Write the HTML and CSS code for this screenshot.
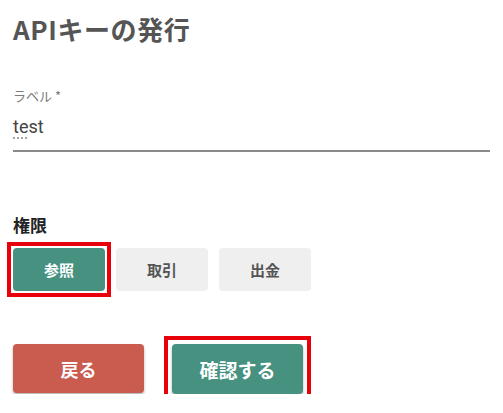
FILE: index.html
```html
<!DOCTYPE html>
<html lang="ja">
<head>
  <meta charset="UTF-8">
  <title>APIキーの発行</title>
  <link rel="stylesheet" href="styles.css">
</head>
<body>

<h1 class="title">APIキーの発行</h1>

<div class="field">
  <label class="field-label">ラベル *</label>
  <div class="field-input"><span class="typo">te</span>st</div>
</div>

<div class="perms">
  <h3>権限</h3>
  <div class="perm-buttons">
    <span class="mark"><button class="perm active">参照</button></span>
    <button class="perm">取引</button>
    <button class="perm">出金</button>
  </div>
</div>

<div class="actions">
  <button class="btn back">戻る</button>
  <span class="mark mark-lg"><button class="btn confirm">確認する</button></span>
</div>

</body>
</html>
```

FILE: styles.css
```css
body {
  margin: 0;
  padding: 0 13px;
  font-family: "Noto Sans CJK JP", "Noto Sans", sans-serif;
  background: #fff;
}
.title {
  margin: 11px 0 0;
  font-size: 26px;
  font-weight: bold;
  color: #555;
  line-height: 36px;
  letter-spacing: 0.6px;
}
.field {
  margin-top: 41px;
  width: 477px;
  border-bottom: 2px solid #8a8a8a;
  padding-bottom: 11px;
}
.field-label {
  display: block;
  font-size: 13px;
  color: #7a7a7a;
  line-height: 16px;
}
.field-input {
  margin-top: 11px;
  font-family: Roboto, sans-serif;
  font-size: 18px;
  color: #444;
  line-height: 24px;
}
.typo {
  text-decoration: underline dotted #999;
  text-underline-offset: 5px;
}
.perms {
  margin-top: 60px;
}
.perms h3 {
  margin: 0;
  font-size: 17px;
  color: #222;
  line-height: 26px;
}
.perm-buttons {
  display: flex;
  gap: 11px;
  margin-top: 10px;
}
.perm {
  width: 92px;
  height: 43px;
  border: none;
  border-radius: 4px;
  background: #efefef;
  color: #555;
  font-family: inherit;
  font-size: 15px;
  font-weight: bold;
}
.perm.active {
  background: #46917f;
  color: #fff;
}
.mark {
  display: flex;
  border: 4px solid #e8000b;
  padding: 2px;
  margin: -6px;
}
.mark-lg {
  padding: 4px;
  margin: -8px;
}
.actions {
  display: flex;
  gap: 28px;
  margin-top: 53px;
}
.btn {
  width: 131px;
  height: 49px;
  border: none;
  border-radius: 4px;
  color: #fff;
  font-family: inherit;
  font-size: 18px;
  font-weight: bold;
  box-shadow: 0 2px 3px rgba(0, 0, 0, 0.3);
}
.back {
  background: #c95c4f;
}
.confirm {
  height: 50px;
  background: #46917f;
  font-size: 19px;
}
```
